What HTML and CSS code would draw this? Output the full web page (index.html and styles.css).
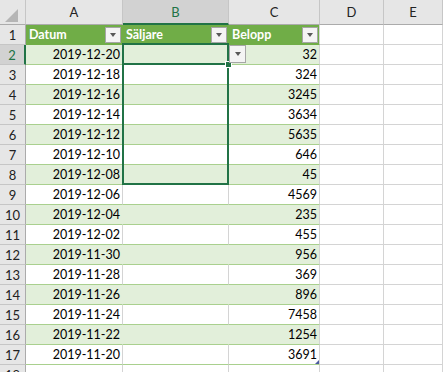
FILE: index.html
```html
<!DOCTYPE html>
<html lang="sv">
<head>
    <meta charset="UTF-8">
    <title>Säljare</title>
    <link rel="stylesheet" href="styles.css">
</head>
<body>
    <div class="sheet">
        <div class="row head">
            <div class="corner"></div>
            <div class="col">A</div>
            <div class="col active">B</div>
            <div class="col">C</div>
            <div class="col">D</div>
            <div class="col">E</div>
        </div>
        <div class="row">
            <div class="rn">1</div>
            <div class="cell t th">Datum<span class="filter"></span></div>
            <div class="cell t th">Säljare<span class="filter"></span></div>
            <div class="cell t th last">Belopp<span class="filter"></span></div>
            <div class="cell"></div>
            <div class="cell"></div>
        </div>
        <div class="row band">
            <div class="rn active">2</div>
            <div class="cell t num">2019-12-20</div>
            <div class="cell t"></div>
            <div class="cell t num last">32</div>
            <div class="cell"></div>
            <div class="cell"></div>
        </div>
        <div class="row">
            <div class="rn">3</div>
            <div class="cell t num">2019-12-18</div>
            <div class="cell t"></div>
            <div class="cell t num last">324</div>
            <div class="cell"></div>
            <div class="cell"></div>
        </div>
        <div class="row band">
            <div class="rn">4</div>
            <div class="cell t num">2019-12-16</div>
            <div class="cell t"></div>
            <div class="cell t num last">3245</div>
            <div class="cell"></div>
            <div class="cell"></div>
        </div>
        <div class="row">
            <div class="rn">5</div>
            <div class="cell t num">2019-12-14</div>
            <div class="cell t"></div>
            <div class="cell t num last">3634</div>
            <div class="cell"></div>
            <div class="cell"></div>
        </div>
        <div class="row band">
            <div class="rn">6</div>
            <div class="cell t num">2019-12-12</div>
            <div class="cell t"></div>
            <div class="cell t num last">5635</div>
            <div class="cell"></div>
            <div class="cell"></div>
        </div>
        <div class="row">
            <div class="rn">7</div>
            <div class="cell t num">2019-12-10</div>
            <div class="cell t"></div>
            <div class="cell t num last">646</div>
            <div class="cell"></div>
            <div class="cell"></div>
        </div>
        <div class="row band">
            <div class="rn">8</div>
            <div class="cell t num">2019-12-08</div>
            <div class="cell t"></div>
            <div class="cell t num last">45</div>
            <div class="cell"></div>
            <div class="cell"></div>
        </div>
        <div class="row">
            <div class="rn">9</div>
            <div class="cell t num">2019-12-06</div>
            <div class="cell t"></div>
            <div class="cell t num last">4569</div>
            <div class="cell"></div>
            <div class="cell"></div>
        </div>
        <div class="row band">
            <div class="rn">10</div>
            <div class="cell t num">2019-12-04</div>
            <div class="cell t"></div>
            <div class="cell t num last">235</div>
            <div class="cell"></div>
            <div class="cell"></div>
        </div>
        <div class="row">
            <div class="rn">11</div>
            <div class="cell t num">2019-12-02</div>
            <div class="cell t"></div>
            <div class="cell t num last">455</div>
            <div class="cell"></div>
            <div class="cell"></div>
        </div>
        <div class="row band">
            <div class="rn">12</div>
            <div class="cell t num">2019-11-30</div>
            <div class="cell t"></div>
            <div class="cell t num last">956</div>
            <div class="cell"></div>
            <div class="cell"></div>
        </div>
        <div class="row">
            <div class="rn">13</div>
            <div class="cell t num">2019-11-28</div>
            <div class="cell t"></div>
            <div class="cell t num last">369</div>
            <div class="cell"></div>
            <div class="cell"></div>
        </div>
        <div class="row band">
            <div class="rn">14</div>
            <div class="cell t num">2019-11-26</div>
            <div class="cell t"></div>
            <div class="cell t num last">896</div>
            <div class="cell"></div>
            <div class="cell"></div>
        </div>
        <div class="row">
            <div class="rn">15</div>
            <div class="cell t num">2019-11-24</div>
            <div class="cell t"></div>
            <div class="cell t num last">7458</div>
            <div class="cell"></div>
            <div class="cell"></div>
        </div>
        <div class="row band">
            <div class="rn">16</div>
            <div class="cell t num">2019-11-22</div>
            <div class="cell t"></div>
            <div class="cell t num last">1254</div>
            <div class="cell"></div>
            <div class="cell"></div>
        </div>
        <div class="row">
            <div class="rn">17</div>
            <div class="cell t num">2019-11-20</div>
            <div class="cell t"></div>
            <div class="cell t num last corner-mark">3691</div>
            <div class="cell"></div>
            <div class="cell"></div>
        </div>
        <div class="row">
            <div class="rn">18</div>
            <div class="cell"></div>
            <div class="cell"></div>
            <div class="cell"></div>
            <div class="cell"></div>
            <div class="cell"></div>
        </div>

        <!-- selection B2:B8 -->
        <div class="selection"></div>
        <div class="sel-line"></div>
        <div class="fill-handle"></div>
        <div class="list-btn"><span class="arrow"></span></div>
    </div>
</body>
</html>
```

FILE: styles.css
```css
body {
    margin: 0;
    padding: 0;
    background: #fff;
    font-family: Lato, "Liberation Sans", sans-serif;
    font-size: 12.5px;
    color: #000;
    overflow: hidden;
}

.sheet {
    position: relative;
}

.row {
    display: grid;
    grid-template-columns: 26px 97px 106px 91px 64px 1fr;
    height: 20px;
}

.row.head {
    height: 25px;
}

.row > div {
    box-sizing: border-box;
    border-right: 1px solid #d4d4d4;
    border-bottom: 1px solid #d4d4d4;
    display: flex;
    align-items: center;
    white-space: nowrap;
    overflow: hidden;
}

/* headers */
.corner,
.col,
.rn {
    background: #e6e6e6;
    color: #222;
    font-size: 13px;
}

.corner {
    justify-content: flex-end;
    align-items: flex-end !important;
    padding: 0 2px 2px 0;
}

.corner::after {
    content: "";
    border-left: 13px solid transparent;
    border-bottom: 13px solid #b5b5b5;
}

.row.head > div {
    border-bottom-color: #ababab;
    border-right-color: #c6c6c6;
    justify-content: center;
}

.row.head > .col.active {
    background: #d2d2d2;
    color: #217346;
    border-bottom: 2px solid #217346;
}

.rn {
    justify-content: center;
}

.row > .rn {
    border-right-color: #ababab;
    border-bottom-color: #c6c6c6;
}

.row > .rn.active {
    background: #d2d2d2;
    color: #217346;
    border-right: 2px solid #217346;
}

/* table */
.row > .t {
    border-bottom-color: #a9d08e;
}

.row > .th {
    background: #70ad47;
    color: #fff;
    font-weight: bold;
    border-color: #70ad47;
    justify-content: space-between;
    padding: 0 1px 0 3px;
}

.row.band > .t {
    background: #e2efda;
    border-right-color: #e2efda;
}

.row > .t.last {
    border-right-color: #d4d4d4;
}

.num {
    justify-content: flex-end;
    padding-right: 2px;
}

.filter {
    width: 16px;
    height: 16px;
    box-sizing: border-box;
    border: 1px solid #a6a6a6;
    background: #f4f4f4;
    display: flex;
    align-items: center;
    justify-content: center;
}

.filter::after,
.arrow {
    content: "";
    border-left: 3.5px solid transparent;
    border-right: 3.5px solid transparent;
    border-top: 4px solid #595959;
}

.corner-mark {
    position: relative;
}

.corner-mark::after {
    content: "";
    position: absolute;
    right: 0;
    bottom: 0;
    border-left: 4px solid transparent;
    border-bottom: 4px solid #4b5aa0;
}

/* selection overlay */
.selection {
    position: absolute;
    left: 122px;
    top: 43px;
    width: 107px;
    height: 142px;
    box-sizing: border-box;
    border: 2px solid #217346;
}

.sel-line {
    position: absolute;
    left: 122px;
    top: 63px;
    width: 107px;
    height: 2px;
    background: #217346;
}

.fill-handle {
    position: absolute;
    left: 225px;
    top: 61px;
    width: 5px;
    height: 5px;
    background: #217346;
    border: 1px solid #fff;
}

.list-btn {
    position: absolute;
    left: 229px;
    top: 45px;
    width: 17px;
    height: 18px;
    box-sizing: border-box;
    border: 1px solid #a6a6a6;
    background: #f4f4f4;
    display: flex;
    align-items: center;
    justify-content: center;
}
```
